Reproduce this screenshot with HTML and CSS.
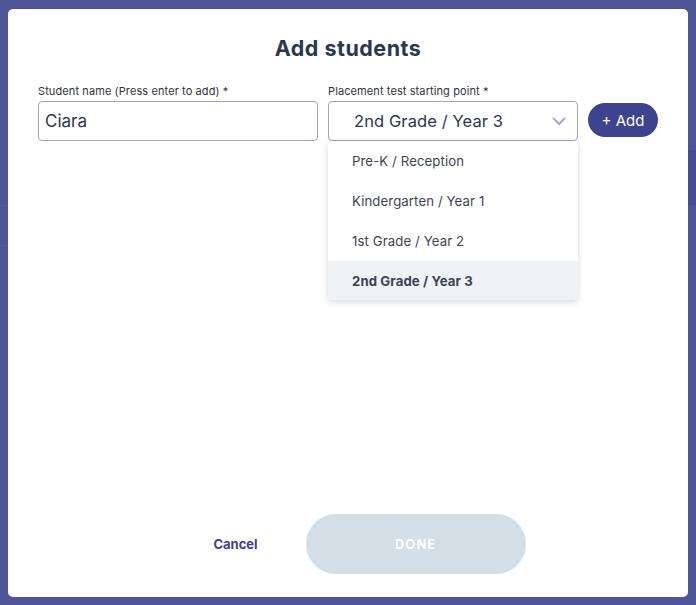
FILE: index.html
```html
<!DOCTYPE html>
<html>
<head>
<meta charset="utf-8">
<link rel="stylesheet" href="styles.css">
</head>
<body>
<div class="backdrop">
  <div class="ghost ghost-a"></div>
  <div class="ghost ghost-b"></div>
  <div class="ghost ghost-c"></div>
</div>
<div class="modal">
  <h1 class="title">Add students</h1>
  <div class="form-row">
    <div class="field field-name">
      <label class="label">Student name (Press enter to add) *</label>
      <div class="input">Ciara</div>
    </div>
    <div class="field field-select">
      <label class="label">Placement test starting point *</label>
      <div class="select">
        <span class="select-value">2nd Grade / Year 3</span>
        <svg class="chevron" width="14" height="9" viewBox="0 0 14 9"><path d="M1.5 1.5 L7 7 L12.5 1.5" fill="none" stroke="#a4a8d0" stroke-width="2" stroke-linecap="round" stroke-linejoin="round"/></svg>
        <ul class="menu">
          <li class="option">Pre-K / Reception</li>
          <li class="option">Kindergarten / Year 1</li>
          <li class="option">1st Grade / Year 2</li>
          <li class="option selected">2nd Grade / Year 3</li>
        </ul>
      </div>
    </div>
    <button class="add-btn">+ Add</button>
  </div>
  <div class="spacer"></div>
  <div class="footer">
    <button class="cancel">Cancel</button>
    <button class="done">DONE</button>
  </div>
</div>
</body>
</html>
```
FILE: styles.css
```css
* { box-sizing: border-box; }
html, body { margin: 0; padding: 0; }
body {
  width: 696px;
  height: 605px;
  background: #4f5497;
  font-family: Inter, "Noto Sans", sans-serif;
  position: relative;
  overflow: hidden;
  padding: 9px 8px 8px 8px;
}
.backdrop { position: absolute; inset: 0; }
.ghost { position: absolute; }
.ghost-a { left: 0; top: 205px; width: 8px; height: 1px; background: #565b9c; }
.ghost-b { left: 0; top: 245px; width: 8px; height: 1px; background: #565b9c; }
.ghost-c { right: 0; top: 150px; width: 8px; height: 55px; background: #474d92; }
.modal {
  position: relative;
  width: 680px;
  height: 588px;
  background: #ffffff;
  border-radius: 5px;
  display: flex;
  flex-direction: column;
  padding: 0 30px;
}
.title {
  margin: 24px 0 0 0;
  text-align: center;
  font-size: 21.5px;
  font-weight: 700;
  color: #2b374f;
  line-height: 30px;
  letter-spacing: 0.5px;
}
.form-row {
  display: flex;
  align-items: flex-end;
  margin-top: 21px;
}
.field { display: flex; flex-direction: column; }
.field-name { width: 280px; }
.field-select { width: 250px; margin-left: 10px; }
.label {
  font-size: 11px;
  color: #2f3342;
  line-height: 14px;
  margin-bottom: 3px;
  padding-left: 0;
  letter-spacing: 0.1px;
}
.input {
  height: 40px;
  border: 1px solid #9ea2c9;
  border-radius: 4px;
  padding: 0 6px;
  display: flex;
  align-items: center;
  font-size: 17px;
  color: #2b374f;
}
.select {
  position: relative;
  height: 40px;
  border: 1px solid #9ea2c9;
  border-radius: 4px;
  display: flex;
  align-items: center;
  padding: 0 0 0 25px;
  font-size: 16.5px;
  color: #2b374f;
  letter-spacing: 0.1px;
}
.select-value { flex: 1; }
.chevron { margin-right: 11px; }
.menu {
  position: absolute;
  left: -1px;
  top: 39px;
  width: 250px;
  margin: 0;
  padding: 0;
  list-style: none;
  background: #fff;
  box-shadow: 0 2px 6px rgba(40, 50, 80, 0.18);
  border-radius: 0 0 3px 3px;
  z-index: 5;
}
.option {
  height: 40px;
  display: flex;
  align-items: center;
  padding-left: 24px;
  font-size: 13.2px;
  color: #3a4456;
}
.option.selected { background: #eff3f6; font-weight: 700; height: 39px; border-radius: 0 0 3px 3px; }
.add-btn {
  margin-left: 10px;
  margin-bottom: 4px;
  width: 70px;
  height: 34px;
  border: none;
  border-radius: 17px;
  background: #3d438f;
  color: #fff;
  font-family: inherit;
  font-size: 15px;
  padding: 0;
}
.spacer { flex: 1; }
.footer {
  display: flex;
  justify-content: center;
  align-items: center;
  margin-bottom: 23px;
  padding-left: 43px;
}
.cancel {
  background: none;
  border: none;
  font-family: inherit;
  font-weight: 700;
  font-size: 13px;
  color: #3d438f;
  padding: 0;
  margin-right: 48px;
}
.done {
  width: 220px;
  height: 60px;
  border: none;
  border-radius: 30px;
  background: #d3dee6;
  color: #fff;
  font-family: inherit;
  font-weight: 700;
  font-size: 13px;
  letter-spacing: 1px;
}
```
